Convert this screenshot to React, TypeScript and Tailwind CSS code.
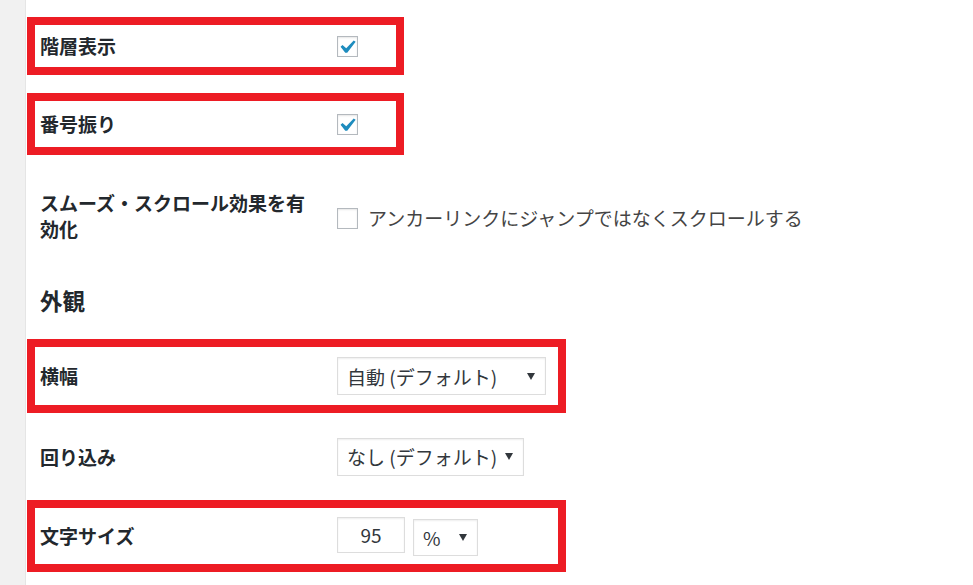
import React from "react";

const font = { fontFamily: '"Noto Sans CJK JP", "Noto Sans", sans-serif' };

function Check({ checked }: { checked: boolean }) {
  return (
    <div className="w-[21px] h-[21px] shrink-0 border border-[#b4b9be] bg-white shadow-[inset_0_1px_2px_rgba(0,0,0,0.1)] flex items-center justify-center">
      {checked && (
        <svg width="16" height="13" viewBox="5.4 4.6 11 9.8" preserveAspectRatio="none">
          <path d="M14.83 4.89l1.34.94-5.81 8.38H9.02L5.78 9.67l1.34-1.25 2.57 2.4z" fill="#1e8cbe" />
        </svg>
      )}
    </div>
  );
}

function Arrow() {
  return (
    <svg width="8" height="7" viewBox="0 0 8 7" className="shrink-0">
      <path d="M0 0h8L4 7z" fill="#32373c" />
    </svg>
  );
}

function Select({ label, w, h }: { label: string; w: string; h: string }) {
  return (
    <div
      className={`${w} ${h} border border-[#dddddd] bg-white shadow-[inset_0_1px_2px_rgba(0,0,0,0.07)] flex items-center justify-between pl-[9px] pr-[10px] text-[19px] text-[#32373c]`}
    >
      <span className="leading-none">{label}</span>
      <Arrow />
    </div>
  );
}

function Row({
  label,
  highlight,
  h,
  w,
  children,
}: {
  label: string;
  highlight: boolean;
  h: string;
  w: string;
  children: React.ReactNode;
}) {
  return (
    <div
      className={`${h} ${w} ml-px border-8 ${
        highlight ? "border-[#ed1c24]" : "border-transparent"
      } flex items-center pl-[5px]`}
    >
      <div className="w-[297px] shrink-0 font-bold text-[19px] text-[#23282d] leading-[26px]">{label}</div>
      <div className="flex items-center gap-[8px]">{children}</div>
    </div>
  );
}

export default function App() {
  return (
    <div className="flex min-h-[585px] w-[973px] bg-white overflow-hidden" style={font}>
      <div className="w-[26px] shrink-0 bg-[#f1f1f1] border-r border-[#e5e5e5]" />
      <div className="flex flex-col flex-1">
        <div className="h-[17px]" />
        <Row label="階層表示" highlight h="h-[58px]" w="w-[377px]">
          <Check checked />
        </Row>
        <div className="h-[18px]" />
        <Row label="番号振り" highlight h="h-[62px]" w="w-[377px]">
          <Check checked />
        </Row>
        {/* smooth scroll row */}
        <div className="h-[115px] w-[900px] ml-px border-8 border-transparent flex items-start pl-[5px] pt-[27px]">
          <div className="w-[297px] shrink-0 font-bold text-[19px] text-[#23282d] leading-[26px] pr-[28px]">
            スムーズ・スクロール効果を有効化
          </div>
          <div className="flex items-center gap-[10px] mt-[15px]">
            <Check checked={false} />
            <span className="text-[19px] text-[#444444] leading-[26px] whitespace-nowrap">
              アンカーリンクにジャンプではなくスクロールする
            </span>
          </div>
        </div>
        <div className="h-[69px] pl-[14px] pt-[15px]">
          <h2 className="text-[22.5px] font-bold text-[#23282d] leading-[30px]">外観</h2>
        </div>
        <Row label="横幅" highlight h="h-[74px]" w="w-[539px]">
          <Select label="自動 (デフォルト)" w="w-[209px]" h="h-[38px]" />
        </Row>
        <Row label="回り込み" highlight={false} h="h-[87px]" w="w-[539px]">
          <Select label="なし (デフォルト)" w="w-[187px]" h="h-[38px]" />
        </Row>
        <Row label="文字サイズ" highlight h="h-[72px]" w="w-[539px]">
          <div className="w-[68px] h-[36px] border border-[#dddddd] bg-white shadow-[inset_0_1px_2px_rgba(0,0,0,0.07)] flex items-center justify-center text-[19px] text-[#32373c] -mt-[2px]">
            95
          </div>
          <div className="mt-[3px]">
            <Select label="%" w="w-[65px]" h="h-[37px]" />
          </div>
        </Row>
      </div>
    </div>
  );
}
